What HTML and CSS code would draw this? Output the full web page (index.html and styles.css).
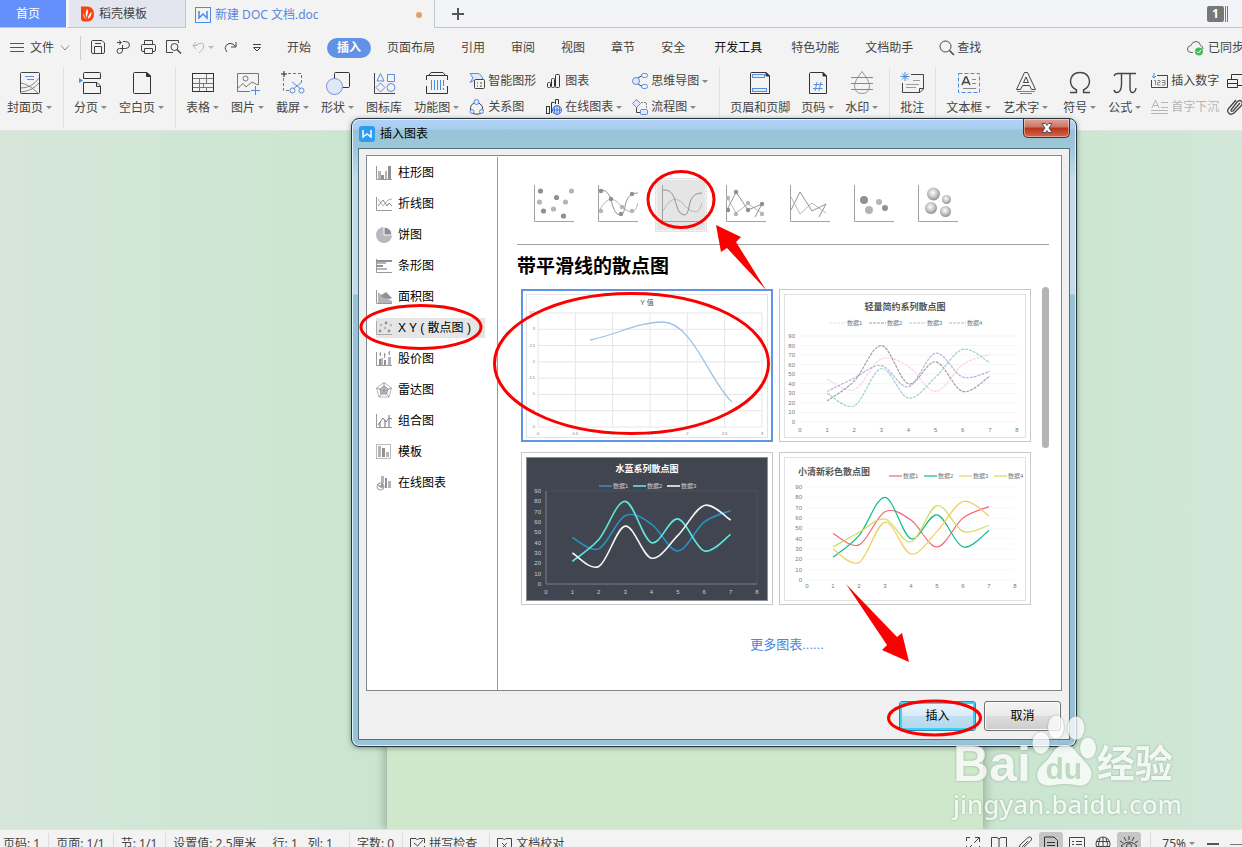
FILE: index.html
```html
<!DOCTYPE html>
<html lang="zh-CN">
<head>
<meta charset="UTF-8">
<meta name="viewport" content="width=device-width, initial-scale=1.0">
<title>新建 DOC 文档.doc</title>
<link rel="stylesheet" href="styles.css">
</head>

<body>

<!-- Document tabs -->
<header class="tabbar">
<button class="tab tab-home">首页</button>
<button class="tab tab-docer">
<svg width="14" height="16" viewBox="0 0 14 16"><path d="M0 0.500H7Q13 1.500 13 8Q13 14.500 7 15.500H3Q0 15.500 0 12Z" fill="#f7410e"/><path d="M6 3Q8 5 6.500 8Q5.500 10 6.500 12Q3 9 6 3ZM10.500 6Q11 10 7 13Q7 9 10.500 6ZM2.500 7Q3 11 6 13Q1.500 12 2.500 7Z" fill="#fff"/></svg>
稻壳模板
</button>
<button class="tab tab-active">
<svg width="16" height="16" viewBox="0 0 16 16" fill="none" stroke="#4a8be6"><rect x=".5" y=".5" width="15" height="15"/><path d="M4 4V11L8 7L12 11V4" stroke-width="1.500"/></svg>
<span>新建 DOC 文档.doc</span>
<i class="unsaved"></i>
</button>
<div class="tab-rest">
<button class="new-tab" aria-label="新建"><svg width="12" height="12" viewBox="0 0 12 12" stroke="#555" stroke-width="2"><path d="M6 0V12M0 6H12"/></svg></button>
<span class="win-count"><b>1</b><i></i><i></i></span>
</div>
</header>

<!-- Menu row -->
<nav class="menubar">
<button class="file-btn">
<svg width="14" height="11" viewBox="0 0 14 11" stroke="#555"><path d="M0 1.500H14M0 5.500H14M0 9.500H14"/></svg>
文件
<svg width="10" height="6" viewBox="0 0 10 6" fill="none" stroke="#888"><path d="M1 .5L5 5L9 .5"/></svg>
</button>
<div class="quick">
<button aria-label="保存"><svg width="15" height="15" viewBox="0 0 15 15" fill="none" stroke="#444"><path d="M1.500 .5H11L13.500 3V12Q13.500 13.500 12 13.500H2Q.5 13.500 .5 12V2Q.5 .5 1.500 .5ZM3.500 13V6.500H10.500V13M4 3.500H10"/></svg></button>
<button aria-label="输出"><svg width="15" height="15" viewBox="0 0 15 15" fill="none" stroke="#444"><path d="M1 2.500H5M3 .5L5.500 2.500L3 4.500M7 1.500H9.500Q13.500 1.500 13.500 5Q13.500 8.500 9.500 8.500H3.500Q1 8.500 1 11Q1 13.500 3.500 13.500Q6.500 13.500 6.500 10V5"/></svg></button>
<button aria-label="打印"><svg width="15" height="15" viewBox="0 0 15 15" fill="none" stroke="#444"><path d="M3.500 4V.5H11.500V4M3.500 11.500H2Q.5 11.500 .5 10V5.500Q.5 4.500 1.500 4.500H13Q14.500 4.500 14.500 5.500V10Q14.500 11.500 13 11.500H11.500M3.500 8.500H11.500V13.500H3.500Z"/></svg></button>
<button aria-label="预览"><svg width="16" height="15" viewBox="0 0 16 15" fill="none" stroke="#444"><path d="M7 12.500H.5V.5H12.500V3"/><circle cx="8.500" cy="7" r="3.500"/><path d="M11 9.500L15 13.500" stroke-width="1.500"/></svg></button>
<button class="undo" aria-label="撤销"><svg width="13" height="13" viewBox="0 0 13 13" fill="none" stroke="#b5b5b5"><path d="M4 1L1 4.500L4 8M1 4.500H5M4 4Q11 0 12 5Q12 8 7 12"/></svg><i class="caret"></i></button>
<button aria-label="恢复"><svg width="13" height="13" viewBox="0 0 13 13" fill="none" stroke="#444"><path d="M12 1V6H7M12 6Q8 1 4 3Q-1 6 3 11"/></svg></button>
<button class="more-quick" aria-label="更多"><svg width="10" height="8" viewBox="0 0 10 8" fill="none" stroke="#444"><path d="M1 .5H9M1.500 3.500H8.500L5 7Z"/></svg></button>
</div>
<div class="menus">
<button>开始</button>
<button class="current">插入</button>
<button>页面布局</button>
<button>引用</button>
<button>审阅</button>
<button>视图</button>
<button>章节</button>
<button>安全</button>
<button class="wide dark">开发工具</button>
<button class="wide">特色功能</button>
<button>文档助手</button>
<button class="find"><svg width="16" height="16" viewBox="0 0 16 16" fill="none" stroke="#444"><circle cx="6.500" cy="6.500" r="5.500"/><path d="M10.500 10.500L15 15" stroke-width="1.500"/></svg>查找</button>
</div>
<button class="sync"><svg width="18" height="16" viewBox="0 0 18 16" fill="none" stroke="#666"><path d="M6 12.500H4Q.5 12.500 .5 9Q.5 6 4 5.500Q5 1.500 9 1.500Q13 1.500 13.500 5.500Q16 6 16 9"/><circle cx="12" cy="11.500" r="4" fill="#3fbf5b" stroke="none"/><path d="M10 11.500L11.500 13L14 10" stroke="#fff"/></svg>已同步</button>
</nav>

<!-- Ribbon -->
<section class="ribbon">
<div class="group first">
<button class="tool"><svg width="24" height="24" viewBox="0 0 24 24" fill="none" stroke="#444"><rect x="2.500" y="1.500" width="19" height="21" rx="1"/><path d="M7 5.500H16M9 8.500H16" stroke="#5b8de0"/><path d="M3 12Q10 13 20 22M3 17Q14 17 21 7M3 21Q14 20 21 12" stroke="#888"/></svg><span>封面页<i class="caret"></i></span></button>
</div>
<div class="group">
<button class="tool"><svg width="24" height="24" viewBox="0 0 24 24" fill="none" stroke="#333"><path d="M4.500 7.500V2.500Q4.500 1.500 5.500 1.500H20.500Q21.500 1.500 21.500 2.500V7.500ZM4.500 11.500V22.500H21.500V15L18 11.500ZM17.500 11.500V15.500H21.500"/><path d="M0 7L4 9.500L0 12Z" fill="#4a8be6" stroke="none"/></svg><span>分页<i class="caret"></i></span></button>
<button class="tool"><svg width="24" height="24" viewBox="0 0 24 24" fill="none" stroke="#333"><path d="M4.500 1.500H17L20.500 5V22.500H4.500Q3.500 22.500 3.500 21.500V2.500Q3.500 1.500 4.500 1.500Z"/><path d="M16.500 1.500V5.500H21Z" fill="#333"/></svg><span>空白页<i class="caret"></i></span></button>
</div>
<div class="group">
<button class="tool"><svg width="24" height="24" viewBox="0 0 24 24" fill="none" stroke="#777"><path d="M1 7.500H22M1 12.500H22M1 16.500H22M8.500 7V21M15.500 2V12M12.500 12V16M15.500 16V21"/><rect x="1.500" y="2.500" width="21" height="18" stroke="#333"/></svg><span>表格<i class="caret"></i></span></button>
<button class="tool"><svg width="24" height="24" viewBox="0 0 24 24" fill="none" stroke="#777"><path d="M14 20.500H1.500V2.500H22.500V14"/><circle cx="9.500" cy="7.500" r="2.500"/><path d="M2 17L7 12.500L10 16L16 11L22 14"/><path d="M19.500 15V24M15 19.500H24" stroke="#4a8be6"/></svg><span>图片<i class="caret"></i></span></button>
<button class="tool"><svg width="24" height="24" viewBox="0 0 24 24" fill="none" stroke="#777"><path d="M7 2.500H20.500V14M2.500 7V19.500H10" stroke-dasharray="3 2"/><path d="M3 0V6M0 3H6" stroke="#222"/><g stroke="#5b8de0"><path d="M11 11L20 18M21 11L12 18"/><circle cx="11.500" cy="19.500" r="2.500"/><circle cx="20.500" cy="19.500" r="2.500"/></g></svg><span>截屏<i class="caret"></i></span></button>
<button class="tool"><svg width="24" height="24" viewBox="0 0 24 24"><rect x="8.500" y="1.500" width="15" height="15" rx="1" fill="none" stroke="#333"/><circle cx="8.500" cy="15.500" r="8" fill="#e0e8f8" stroke="#6b94dc"/></svg><span>形状<i class="caret"></i></span></button>
<button class="tool"><svg width="24" height="24" viewBox="0 0 24 24" fill="none" stroke="#5b8de0"><path d="M2.500 2V22.500H23" stroke="#444"/><path d="M8.500 2.500L12 10H5ZM15.500 3.500H22.500V10.500H15.500ZM8.500 12L13 16.500L8.500 21L4 16.500Z"/><circle cx="19" cy="16.500" r="4"/></svg><span>图标库</span></button>
<button class="tool"><svg width="24" height="24" viewBox="0 0 24 24" fill="none" stroke="#333"><path d="M4 4L6 1.500H18L20 4M1.500 9V4.500H22.500V9M1.500 15V22.500H22.500V15"/><path d="M6.500 9V19M9.500 9V19M12.500 9V19M15.500 9V19M18.500 9V15M18.500 17V19" stroke="#4a8be6"/></svg><span>功能图<i class="caret"></i></span></button>
<div class="pair">
<button><svg width="16" height="16" viewBox="0 0 16 16" fill="none" stroke="#5b8de0"><path d="M1 .5H10L14 5L11 7.500H5L1 9.500L4 5Z" fill="#dfe9f8"/><rect x="5.500" y="6.500" width="10" height="9" rx="1" fill="#f3f3f3" stroke="#444"/><path d="M8 10H9M11 10H13M8 13H9M11 13H13" stroke="#444"/></svg>智能图形</button>
<button><svg width="16" height="16" viewBox="0 0 16 16" fill="none" stroke="#444"><path d="M5 4Q1 6 1.500 11M10 4Q14 6 14 11M4 14.500Q8 16 12 14.500"/><g fill="#dfe9f8" stroke="#5b8de0"><circle cx="7.500" cy="3" r="2.500"/><circle cx="3" cy="12.500" r="2"/><circle cx="12.500" cy="12.500" r="2"/></g></svg>关系图</button>
</div>
<div class="pair">
<button><svg width="16" height="16" viewBox="0 0 16 16" fill="none" stroke="#333"><rect x="1.500" y="9.500" width="3" height="5" rx="1"/><rect x="5.500" y="5.500" width="3" height="9" rx="1"/><rect x="9.500" y="1.500" width="4" height="13" rx="1"/></svg>图表</button>
<button><svg width="16" height="16" viewBox="0 0 16 16" fill="none" stroke="#333"><rect x=".5" y="7.500" width="3" height="7"/><path d="M5.500 14V3.500H8.500M9.500 5V.5H12.500V5"/><circle cx="11" cy="11" r="4.500" fill="#dfe9f8" stroke="#3f78d8"/><path d="M6.500 11H15.500M11 6.500V15.500M9 7Q7.500 11 9 15M13 7Q14.500 11 13 15" stroke="#3f78d8"/></svg>在线图表<i class="caret"></i></button>
</div>
<div class="pair">
<button><svg width="16" height="16" viewBox="0 0 16 16" fill="none" stroke="#5b8de0"><path d="M6 5L10 2.500M6 11L10 13.500" stroke="#444"/><circle cx="4" cy="8" r="3.500" fill="#dfe9f8"/><rect x="9.500" y=".5" width="6" height="4" rx="2"/><rect x="9.500" y="11.500" width="6" height="4" rx="2"/></svg>思维导图<i class="caret"></i></button>
<button><svg width="16" height="16" viewBox="0 0 16 16" fill="none" stroke="#5b8de0"><path d="M4.500 8V13.500H8" stroke="#444"/><path d="M9 3.500H14.500V9" stroke="#888" stroke-dasharray="2 1"/><path d="M4.500 .5L8.500 4.500L4.500 8.500L.5 4.500Z" fill="#dfe9f8"/><rect x="8.500" y="10.500" width="7" height="5" rx="1" fill="#dfe9f8"/></svg>流程图<i class="caret"></i></button>
</div>
</div>
<div class="group tight">
<button class="tool"><svg width="24" height="24" viewBox="0 0 24 24" fill="none" stroke="#333"><path d="M3.500 1.500H18L21.500 5V22.500H2.500V2.500Q2.500 1.500 3.500 1.500Z"/><path d="M18 1.500V5H21.500Z" fill="#333"/><rect x="4.500" y="3.500" width="12" height="3" fill="#dfe9f8" stroke="#5b8de0"/><rect x="4.500" y="17.500" width="14" height="3" fill="#dfe9f8" stroke="#5b8de0"/></svg><span>页眉和页脚</span></button>
<button class="tool"><svg width="24" height="24" viewBox="0 0 24 24" fill="none" stroke="#333"><path d="M4.500 1.500H17L20.500 5V22.500H3.500V2.500Q3.500 1.500 4.500 1.500Z"/><path d="M17 1.500V5H20.500Z" fill="#333"/><path d="M11 11L9 20M15 11L13 20M7.500 13.500H17M7 17.500H16.500" stroke="#5b8de0"/></svg><span>页码<i class="caret"></i></span></button>
<button class="tool"><svg width="24" height="24" viewBox="0 0 24 24" fill="none" stroke="#999"><path d="M12 .5Q4.500 10 4.500 15Q5 22.500 12 22.500Q19 22.500 19.500 15Q19.500 10 12 .5Z"/><path d="M1 6.500H23M1 12.500H23M1 18.500H23" stroke="#5b8de0"/></svg><span>水印<i class="caret"></i></span></button>
</div>
<div class="group">
<button class="tool"><svg width="24" height="24" viewBox="0 0 24 24" fill="none" stroke="#444"><path d="M11 3.500H23.500V18L20 21.500H2.500V12M19.500 21V17.500H23.500"/><path d="M6 13.500H19M6 16.500H16M13 9.500H20" stroke="#999"/><path d="M5 1V10M.5 5.500H9.500M2 2.500L8 8.500M8 2.500L2 8.500" stroke="#4a8be6"/></svg><span>批注</span></button>
</div>
<div class="group last">
<button class="tool"><svg width="24" height="24" viewBox="0 0 24 24" fill="none" stroke="#444"><rect x="1.500" y="2.500" width="21" height="19" stroke="#4a8be6" stroke-dasharray="4 2"/><path d="M5 14L8.500 6H9.500L13 14M6.500 11.500H11.500" stroke-width="1.500"/><path d="M15 8.500H19M15 12.500H19M6 17.500H19" stroke="#888"/></svg><span>文本框<i class="caret"></i></span></button>
<button class="tool"><svg width="24" height="24" viewBox="0 0 24 24" fill="none" stroke="#444"><path d="M2.500 18.500L10.500 1.500H13.500L21.500 18.500H17.500L15.500 14.500H8.500L6.500 18.500ZM9.500 11.500L12 6L14.500 11.500Z"/><path d="M3 20.500H21M6 22.500H18" stroke="#4a8be6"/></svg><span>艺术字<i class="caret"></i></span></button>
<button class="tool far"><svg width="24" height="24" viewBox="0 0 24 24" fill="none" stroke="#444"><path d="M2 21.500H8.500V19Q2.500 16 2.500 10Q3.500 1.500 12 1.500Q20.500 1.500 21.500 10Q21.500 16 15.500 19V21.500H22" stroke-width="1.400"/></svg><span>符号<i class="caret"></i></span></button>
<button class="tool"><svg width="24" height="24" viewBox="0 0 24 24" fill="none" stroke="#444"><path d="M1 5Q2 2.500 5 2.500H23M8.500 3V14Q8 22 3 21.500Q1.500 21 1 19M17 3V17Q17 22 20 21.500Q22.500 21 23 17" stroke-width="1.400"/></svg><span>公式<i class="caret"></i></span></button>
<div class="pair">
<button><svg width="17" height="16" viewBox="0 0 17 16" fill="none" stroke="#444"><path d="M6 2.500H16.500V14.500H.5V7"/><path d="M3 0V5M1 3L3 5L5 3" stroke="#4a8be6"/><path d="M3 7.500H4.500V12M6.500 7.500H9V9.500H6.500V12H9.500M11 7.500H14V12H11M11 9.500H14" stroke="#888"/></svg>插入数字</button>
<button class="off"><svg width="17" height="16" viewBox="0 0 17 16" fill="none" stroke="#b5b5b5"><path d="M1 9L4.500 1L8 9M2 6.500H7M10 3.500H17M10 8.500H17M0 11.500H17M0 14.500H17"/></svg>首字下沉</button>
</div>
<div class="pair edge">
<button aria-label="对象"><svg width="16" height="16" viewBox="0 0 16 16" fill="none" stroke="#333"><path d="M4.500 6V1.500H15M.5 6.500H10.500V14.500H.5ZM.5 10.500H10M10 12.500H16"/></svg></button>
<button aria-label="附件"><svg width="16" height="16" viewBox="0 0 16 16" fill="none" stroke="#444" stroke-width="1.300"><path d="M13 4L6 12Q4 13 4 11L10 3Q13 0 15 3Q16 5 14 7L7 14Q3 17 1 13Q0 11 2 9L9 1"/></svg></button>
</div>
</div>
</section>

<!-- Document area -->
<main class="workspace">
<div class="page"></div>
</main>

<!-- Status bar -->
<footer class="statusbar">
<div class="status-row">
<span class="stat">页码: 1</span>
<span class="stat">页面: 1/1</span>
<span class="stat">节: 1/1</span>
<span class="stat open">设置值: 2.5厘米</span>
<span class="stat line-col"><span>行: 1</span><span>列: 1</span></span>
<span class="stat">字数: 0</span>
<button class="stat check"><svg width="15" height="14" viewBox="0 0 15 14" fill="none" stroke="#444"><path d="M6 11.500H.5V1.500H6L7.500 3L9 1.500H14.500V6M14.500 9V11.500H9M4 6L7.500 9L13 3"/></svg>拼写检查</button>
<button class="stat check open"><svg width="15" height="14" viewBox="0 0 15 14" fill="none" stroke="#444"><path d="M5 12.500H.5V1.500H6L7.500 3L9 1.500H14.500V12.500H10M5 6L10 11M10 6L5 11"/></svg>文档校对</button>
<div class="views">
<button aria-label="全屏"><svg width="16" height="16" viewBox="0 0 16 16" fill="none" stroke="#444"><path d="M1.500 5V1.500H5M10 1.500H14.500V6M14 2L9 7M1.500 10V14.500H5M2 14L7 9M14.500 10V14.500H10"/></svg></button>
<button aria-label="阅读"><svg width="16" height="16" viewBox="0 0 16 16" fill="none" stroke="#444"><path d="M8 3V14M.5 13V1.500H6L8 3L10 1.500H15.500V13H10L8 14L6 13Z"/></svg></button>
<button aria-label="写作"><svg width="16" height="16" viewBox="0 0 16 16" fill="none" stroke="#444"><path d="M1 15L3 9L11 1.500Q13 0 14.500 2Q15 4 13.500 5L6 12ZM11 5L5 11"/></svg></button>
<button class="on" aria-label="页面"><svg width="16" height="16" viewBox="0 0 16 16" fill="none" stroke="#333"><path d="M1.500 1H11L14.500 4.500V15H1.500ZM4 6.500H12M4 9.500H12M4 12.500H9"/></svg></button>
<button aria-label="大纲"><svg width="16" height="16" viewBox="0 0 16 16" fill="none" stroke="#444"><path d="M.5 1.500H15.500V15H.5ZM3 5.500H5M7 5.500H13M3 8.500H5M7 8.500H13M3 11.500H5M7 11.500H13"/></svg></button>
<button aria-label="网页"><svg width="16" height="16" viewBox="0 0 16 16" fill="none" stroke="#444"><circle cx="8" cy="8" r="7"/><path d="M1 5.500H15M1 10.500H15M8 1V15M5 2Q2 8 5 14M11 2Q14 8 11 14"/></svg></button>
<button class="on" aria-label="护眼"><svg width="18" height="16" viewBox="0 0 18 16" fill="none" stroke="#444"><path d="M1 10Q9 2 17 10Q9 17 1 10ZM9 0V4M4 1L6 5M14 1L12 5M0 5L3 7M18 5L15 7"/><circle cx="9" cy="10" r="2.500"/></svg></button>
</div>
<button class="zoom-value">75%<i class="caret"></i></button>
<button class="zoom-minus" aria-label="缩小"></button>
<i class="zoom-track"></i>
</div>
</footer>

<!-- Insert chart dialog -->
<div class="dialog" role="dialog" aria-labelledby="dialogTitle">
<div class="titlebar">
<svg width="16" height="16" viewBox="0 0 16 16"><rect width="16" height="16" rx="3" fill="#2b9df4"/><path d="M4 4V11L8 8L12 11V4" fill="none" stroke="#fff" stroke-width="1.500"/></svg>
<span id="dialogTitle">插入图表</span>
<button class="close" aria-label="关闭"><svg width="12" height="10" viewBox="0 0 12 10"><path d="M1 .5H4.500L6 2.500L7.500 .5H11L8 5L11 9.500H7.500L6 7.500L4.500 9.500H1L4 5Z" fill="#fff" stroke="#4d5566"/></svg></button>
</div>
<div class="client">
<div class="panel">
<nav class="kinds">
<button><svg width="16" height="16" viewBox="0 0 16 16"><path d="M.5 1V14.500H16" fill="none" stroke="#999"/><path d="M2 6H5V14H2ZM9 6H11V14H9Z" fill="#b4b4ba"/><path d="M5 10H8V14H5ZM12 1H15V14H12Z" fill="#909096"/></svg>柱形图</button>
<button><svg width="16" height="16" viewBox="0 0 16 16" fill="none" stroke="#999"><path d="M.5 1V14.500H16"/><path d="M2 3L7 10L12 4L16 3" stroke="#b4b4ba"/><path d="M2 10L7 4L11 10L13 7L16 10" stroke="#888"/></svg>折线图</button>
<button><svg width="16" height="16" viewBox="0 0 16 16"><circle cx="8" cy="8" r="8" fill="#b8b8be"/><path d="M8 8V0A8 8 0 0 1 16 8Z" fill="#8f8f95" stroke="#fff"/></svg>饼图</button>
<button><svg width="16" height="16" viewBox="0 0 16 16"><path d="M.5 1V14.500H16" fill="none" stroke="#999"/><path d="M1 2H16V4H1Z" fill="#909096"/><path d="M1 4H10V6H1ZM1 10H11V12H1Z" fill="#b4b4ba"/><path d="M1 7H7V9H1Z" fill="#909096"/></svg>条形图</button>
<button><svg width="16" height="16" viewBox="0 0 16 16"><path d="M.5 1V14.500H16" fill="none" stroke="#999"/><path d="M2 3L8 8L16 12V14H2Z" fill="#b4b4ba"/><path d="M4 7L10 3L16 9L13 10L8 9Z" fill="#909096"/></svg>面积图</button>
<button class="selected"><svg width="16" height="16" viewBox="0 0 16 16"><path d="M.5 1V14.500H16" fill="none" stroke="#aaa"/><g fill="#909096"><circle cx="4" cy="11" r="1.400"/><circle cx="10" cy="3" r="1.400"/><circle cx="13" cy="11" r="1.400"/></g><g fill="#b4b4ba"><circle cx="5" cy="5" r="1.300"/><circle cx="9" cy="8" r="1.300"/><circle cx="15" cy="5" r="1.200"/></g></svg>X Y ( 散点图 )</button>
<button><svg width="16" height="16" viewBox="0 0 16 16"><path d="M.5 1V14.500H16M4.500 1V5M8.500 2V7M13.500 0V4M3 3H5M8 4H10M12 2H14" fill="none" stroke="#999"/><path d="M3 8H5V14H3ZM8 9H10V14H8Z" fill="#909096"/><path d="M5 7H7V14H5ZM12 6H15V14H12Z" fill="#b4b4ba"/></svg>股价图</button>
<button><svg width="16" height="16" viewBox="0 0 16 16" stroke="#999"><path d="M8 .5L15.500 6L13 15H3L.5 6Z" fill="none" stroke="#b4b4ba"/><path d="M8 4L12 7L10.500 12H5L4 7Z" fill="#c4c4ca"/><path d="M8 .5V9M.5 6L8 9L15.500 6M3 15L8 9L13 15" fill="none"/></svg>雷达图</button>
<button><svg width="16" height="16" viewBox="0 0 16 16"><path d="M.5 1V14.500H16" fill="none" stroke="#999"/><path d="M3 9H5V14H3ZM8 7H10V14H8ZM12 2H14V14H12Z" fill="#b4b4ba"/><path d="M2 12L7 5L10 9L13 5L16 6" fill="none" stroke="#808086"/></svg>组合图</button>
<button><svg width="16" height="16" viewBox="0 0 16 16"><rect x=".5" y=".5" width="14" height="14" fill="none" stroke="#bbb"/><path d="M2 2H5V13H2ZM10 8H13V13H10Z" fill="#b4b4ba"/><path d="M6 4H9V13H6Z" fill="#909096"/></svg>模板</button>
<button><svg width="16" height="16" viewBox="0 0 16 16"><path d="M5 1H8V8H5ZM12 6H15V13H12Z" fill="#b4b4ba"/><path d="M9 3H11V13H9Z" fill="#909096"/><circle cx="4.500" cy="11.500" r="3.500" fill="#fff" stroke="#999"/><path d="M2 10L5 12L6 9L7 13" fill="none" stroke="#999" stroke-width="1.500"/></svg>在线图表</button>
</nav>
<div class="content">
<div class="types">
<button aria-label="散点图"><svg width="40" height="37" viewBox="0 0 40 37"><path class="axis" d="M.5 0V36.500H40"/><g fill="#8f8f95"><circle cx="6.500" cy="6" r="2.600"/><circle cx="22.500" cy="12.500" r="2.600"/><circle cx="9.500" cy="26" r="2.600"/><circle cx="29.500" cy="31" r="2.600"/></g><g fill="#b4b4ba"><circle cx="37.500" cy="6" r="2.600"/><circle cx="5.500" cy="17" r="2.600"/><circle cx="31.500" cy="17" r="2.600"/><circle cx="19.500" cy="24" r="2.600"/></g></svg></button>
<button aria-label="带平滑线和数据标记的散点图"><svg width="40" height="37" viewBox="0 0 40 37"><path class="axis" d="M.5 0V36.500H40"/><path class="light" d="M1 26Q7 14 14 14Q19 15 24 22Q29 27 34 27Q38 26 40 18"/><path class="deep" d="M1 5H4C16 6 12 29 22 30C30 30 23 8 40 8"/><g fill="#8f8f95"><circle cx="3" cy="6" r="2.200"/><circle cx="13" cy="14" r="2.200"/><circle cx="23" cy="29" r="2.200"/><circle cx="34" cy="9" r="2.200"/></g><g fill="#b4b4ba"><circle cx="3" cy="26" r="2.200"/><circle cx="24" cy="22" r="2.200"/><circle cx="34" cy="26" r="2.200"/></g></svg></button>
<button class="picked" aria-label="带平滑线的散点图"><svg width="40" height="37" viewBox="0 0 40 37"><path class="axis" d="M.5 0V36.500H40"/><path class="light" d="M1 26Q7 14 14 14Q19 15 24 22Q29 27 34 27Q38 26 40 18"/><path class="deep" d="M1 5H4C16 6 12 29 22 30C30 30 23 8 40 8"/></svg></button>
<button aria-label="带直线和数据标记的散点图"><svg width="40" height="37" viewBox="0 0 40 37"><path class="axis" d="M.5 0V36.500H40"/><path class="light" d="M1 12L10 28L22 19L36 28"/><path class="deep" d="M1 25L10 7L22 25L36 19L29 32"/><g fill="#8f8f95"><circle cx="2" cy="25" r="2.200"/><circle cx="10" cy="7" r="2.200"/><circle cx="22" cy="25" r="2.200"/><circle cx="36" cy="19" r="2.200"/></g><g fill="#b4b4ba"><circle cx="2" cy="13" r="2.200"/><circle cx="10" cy="29" r="2.200"/><circle cx="22" cy="18" r="2.200"/><circle cx="36" cy="29" r="2.200"/></g></svg></button>
<button aria-label="带直线的散点图"><svg width="40" height="37" viewBox="0 0 40 37"><path class="axis" d="M.5 0V36.500H40"/><path class="light" d="M1 12L10 29L22 18L36 28"/><path class="deep" d="M1 25L10 7L22 26L36 19L29 32"/></svg></button>
<button aria-label="气泡图"><svg width="40" height="37" viewBox="0 0 40 37"><path class="axis" d="M.5 0V36.500H40"/><g fill="#8f8f95"><circle cx="10" cy="15" r="4"/><circle cx="31" cy="23" r="3"/></g><g fill="#b4b4ba"><circle cx="15" cy="25" r="4"/><circle cx="25" cy="17" r="3"/></g></svg></button>
<button aria-label="三维气泡图"><svg width="40" height="37" viewBox="0 0 40 37"><defs><radialGradient id="ball" cx=".45" cy=".4" r=".65"><stop offset="0" stop-color="#fff"/><stop offset=".5" stop-color="#c8c8c8"/><stop offset="1" stop-color="#858585"/></radialGradient></defs><path class="axis" d="M.5 0V36.500H40"/><g fill="url(#ball)"><circle cx="15.500" cy="9" r="6.500"/><circle cx="28.500" cy="14.500" r="4.500"/><circle cx="13" cy="23" r="6"/><circle cx="27.500" cy="26.500" r="5.500"/></g></svg></button>
</div>
<h2>带平滑线的散点图</h2>
<div class="gallery">
<div class="thumbs">
<button class="thumb chosen" aria-label="Y 值"><svg id="chartDefault" width="242" height="144" viewBox="0 0 242 144"></svg></button>
<button class="thumb" aria-label="轻量简约系列散点图"><svg id="chartLight" width="242" height="144" viewBox="0 0 242 144"></svg></button>
<button class="thumb" aria-label="水蓝系列散点图"><svg id="chartDark" width="242" height="144" viewBox="0 0 242 144"></svg></button>
<button class="thumb" aria-label="小清新彩色散点图"><svg id="chartColor" width="242" height="144" viewBox="0 0 242 144"></svg></button>
</div>
<div class="scrollbar"></div>
</div>
<a class="more" href="#">更多图表......</a>
</div>
</div>
<div class="actions">
<button class="btn primary">插入</button>
<button class="btn">取消</button>
</div>
</div>
</div>

<!-- Watermark -->
<div class="watermark">
<div class="wm-logo">
<span class="wm-bai">Bai</span>
<span class="wm-paw">
<svg width="66" height="74" viewBox="0 0 66 74" fill="#fff"><ellipse cx="10" cy="28" rx="8.500" ry="11"/><ellipse cx="25" cy="12" rx="8" ry="11.500"/><ellipse cx="45" cy="13" rx="8.500" ry="11.500"/><ellipse cx="57" cy="33" rx="8" ry="10.500"/><path d="M34 30Q41 30 46 38Q52 44 57 50Q63 58 59 65Q54 73 44 70Q34 68 24 70Q12 73 7 65Q4 57 11 50Q18 44 22 37Q27 30 34 30Z"/></svg>
<b>du</b>
</span>
<span class="wm-jy">经验</span>
</div>
<div class="wm-url">jingyan.baidu.com</div>
</div>

<!-- Red marks -->
<svg class="marks" width="1242" height="847" viewBox="0 0 1242 847">
<g fill="none" stroke="#fb0000" stroke-width="3">
<ellipse cx="681" cy="199.500" rx="33" ry="28"/>
<ellipse cx="421" cy="327" rx="60" ry="21.500"/>
<ellipse cx="631.500" cy="363.500" rx="137" ry="70"/>
<ellipse cx="934.500" cy="718" rx="46" ry="17"/>
</g>
<g fill="#fb0000">
<path d="M716 225L741 237L736 242L766 290L727 248L721 252Z"/>
<path d="M846 584L897 637L902 633L909 662L882 650L887 645Z"/>
</g>
</svg>

<script src="charts.js"></script>
</body>
</html>
```

FILE: styles.css
```css
*{
    box-sizing:border-box;
}

body{
    margin:0;
    height:100vh;
    display:flex;
    flex-direction:column;
    overflow:hidden;
    position:relative;
    background:#f3f3f3;
    color:#444;
    font-family:"Noto Sans", "Noto Sans CJK SC", sans-serif;
    font-size:12px;
    line-height:16px;
}

button{
    border:none;
    padding:0;
    background:none;
    color:inherit;
    font:inherit;
    white-space:nowrap;
    cursor:pointer;
}

svg{
    display:block;
    flex:none;
}

.caret{
    display:inline-block;
    margin-left:3px;
    border:3px solid transparent;
    border-top-color:#888;
    border-bottom:none;
    vertical-align:3px;
}

/* tabs */
.tabbar{
    display:flex;
    flex:none;
    height:28px;
}

.tab{
    display:flex;
    align-items:center;
    padding-top:1px;
    border-bottom:1px solid #c0c6d0;
}

.tab-home{
    width:66px;
    padding-left:16px;
    background:#6390fb;
    color:#fff;
}

.tab-docer{
    width:120px;
    gap:4px;
    padding-left:12px;
    background:#e3e6ef;
    border-left:3px solid #f3f4f8;
    border-right:1px solid #c0c6d0;
}

.tab-active{
    width:249px;
    gap:4px;
    padding:1px 12px 0 9px;
    color:#5a87d8;
    border-bottom:none;
    border-right:1px solid #c0c6d0;
}

.unsaved{
    width:6px;
    height:6px;
    margin-left:auto;
    border-radius:50%;
    background:#e8a05c;
}

.tab-rest{
    display:flex;
    flex:1;
    align-items:center;
    justify-content:space-between;
    padding:0 14px 0 17px;
    background:#f3f4f8;
    border-bottom:1px solid #c0c6d0;
}

.win-count{
    display:flex;
    gap:1px;
}

.win-count b{
    width:17px;
    border-radius:2px;
    background:#777;
    color:#fff;
    text-align:center;
}

.win-count i{
    width:1px;
    background:#777;
}

/* menu row */
.menubar{
    display:flex;
    flex:none;
    align-items:center;
    height:39px;
    padding-left:10px;
    overflow:hidden;
}

.menubar button{
    display:flex;
    flex:none;
    align-items:center;
}

.file-btn{
    gap:6px;
    height:24px;
    padding-right:10px;
    border-right:1px solid #ccc;
}

.quick{
    display:flex;
    align-items:center;
    gap:10px;
    padding-left:10px;
    width:206px;
}

.undo .caret{
    border-top-color:#bbb;
}

.more-quick{
    margin-left:5px;
}

.menus{
    display:flex;
    align-items:center;
    gap:26px;
}

.menus .current{
    height:20px;
    margin:0 -10px;
    padding:0 10px;
    border-radius:10px;
    background:#6092e8;
    color:#fff;
    font-weight:bold;
}

.menus .wide{
    margin-left:3px;
}

.menus .dark{
    color:#111;
}

.menus .find{
    gap:2px;
}

.sync{
    gap:3px;
    margin-left:auto;
    margin-right:-2px;
}

/* ribbon */
.ribbon{
    display:flex;
    flex:none;
    height:63px;
    padding-bottom:2px;
    overflow:hidden;
}

.group{
    display:flex;
    flex:none;
    gap:12px;
    padding:0 11px 0 10px;
    border-right:1px solid #e2e2e2;
}

.group.first{
    padding-left:7px;
}

.group.tight{
    gap:11px;
}

.group.last{
    border-right:none;
}

.tool{
    display:flex;
    flex-direction:column;
    align-items:center;
    gap:5px;
    padding-top:4px;
}

.far{
    margin-left:3px;
}

.pair{
    display:flex;
    flex-direction:column;
    align-items:flex-start;
    gap:10px;
    margin-left:-2px;
    padding-top:6px;
}

.pair button{
    display:flex;
    align-items:center;
    gap:3px;
}

.pair .caret{
    margin-left:0;
}

.pair.edge{
    margin-left:-4px;
}

.off{
    color:#b5b5b5;
}

/* document */
.workspace{
    display:flex;
    flex:1;
    justify-content:center;
    min-height:0;
    padding-left:128px;
    overflow:hidden;
    border-top:1px solid #dfe6df;
    background:linear-gradient(90deg, #d6e6da, #cbe6d0 28%, #cbe6d0 84%, #d2e6d8);
}

.page{
    width:596px;
    background:#cfe8cb;
    box-shadow:0 0 10px 2px #94ab98;
}

/* status bar */
.statusbar{
    flex:none;
    height:18px;
    overflow:hidden;
    border-top:1px solid #e2e2e2;
    background:#f3f3f3;
}

.status-row{
    display:flex;
    align-items:center;
    height:28px;
}

.stat{
    display:flex;
    align-items:center;
    gap:4px;
    height:22px;
    padding:0 8px 0 3px;
    border-right:1px solid #ddd;
}

.stat + .stat{
    padding-left:7px;
}

.stat.open{
    border-right-color:transparent;
}

.stat.line-col{
    gap:10px;
    padding-right:16px;
}

.stat.check{
    padding-right:12px;
}

.views{
    display:flex;
    gap:2px;
    margin-left:auto;
    padding-right:9px;
    border-right:1px solid #ddd;
}

.views button{
    display:flex;
    align-items:center;
    justify-content:center;
    width:24px;
    height:24px;
    border-radius:3px;
}

.views .on{
    background:#c6c6c6;
}

.zoom-value{
    padding:0 12px 0 11px;
}

.zoom-minus{
    width:12px;
    height:2px;
    background:#555;
}

.zoom-track{
    width:12px;
    height:1px;
    margin-left:11px;
    background:#777;
}

/* dialog */
.dialog{
    position:absolute;
    left:351px;
    top:118px;
    width:726px;
    padding:0 6px 6px;
    border:1px solid #26323c;
    border-radius:8px;
    background:linear-gradient(180deg, #b0d2f6 0, #a9cdf0 10px, #98c2d8 11px, #9cc8d8 28px, #c3dce8 60px, #c3dce8 175px, #98c2d6 176px);
    box-shadow:inset 0 0 0 1px #e0f2fb, 0 1px 5px rgba(40,60,50,.5);
    color:#000;
    font-family:"Liberation Sans", "Noto Sans CJK SC", sans-serif;
}

.titlebar{
    display:flex;
    align-items:center;
    gap:5px;
    height:29px;
    padding-left:1px;
}

.close{
    display:flex;
    align-items:center;
    justify-content:center;
    align-self:flex-start;
    width:47px;
    height:19px;
    margin-left:auto;
    border:1px solid #5a2622;
    border-top:none;
    border-radius:0 0 5px 5px;
    background:linear-gradient(180deg, #e0a496, #cd7463 45%, #b8321a 50%, #d4684a);
    box-shadow:inset 0 0 0 1px rgba(255,255,255,.4);
}

.client{
    padding:6px 7px 8px;
    border:1px solid #53727f;
    background:#f0f0f0;
}

.panel{
    display:flex;
    height:536px;
    border:1px solid #828790;
    background:#fff;
}

.kinds{
    display:flex;
    flex-direction:column;
    flex:none;
    gap:11px;
    width:131px;
    margin-top:1px;
    padding:6px 12px 0 9px;
    border-right:1px solid #999;
}

.kinds button{
    display:flex;
    align-items:center;
    gap:6px;
    height:20px;
}

.kinds .selected{
    background:#e5e5e5;
}

.content{
    flex:1;
    padding:22px 12px 0 19px;
}

.types{
    display:flex;
    gap:12px;
    padding:0 0 12px 10px;
    border-bottom:1px solid #a0a0a0;
}

.types button{
    width:52px;
    height:54px;
    padding:7px 6px;
}

.types .picked{
    background:#e5e5e5;
    outline:1px dotted #fff;
    outline-offset:-2px;
}

.types svg{
    height:37px;
    margin:-3px 0 0 1px;
}

.axis,
.light,
.deep{
    fill:none;
    stroke:#a0a0a6;
}

.light{
    stroke:#b8b8be;
}

.deep{
    stroke:#929298;
}

h2{
    margin:9px 0 7px;
    font-size:19px;
    line-height:26px;
}

.gallery{
    display:flex;
    justify-content:space-between;
}

.thumbs{
    display:grid;
    grid-template-columns:252px 252px;
    gap:10px 6px;
    padding:2px 0 0 4px;
}

.thumb{
    display:flex;
    align-items:center;
    justify-content:center;
    height:153px;
    border:1px solid #c8c8c8;
    background:#fff;
}

.thumb.chosen{
    border:2px solid #5f93e6;
}

.thumb text{
    font-size:6px;
    fill:#777;
}

.thumb .chart-title{
    font-size:9px;
    font-weight:bold;
    fill:#555;
}

#chartDark text{
    fill:#c8ccd2;
}

#chartDark .chart-title{
    fill:#fff;
}

#chartDefault text{
    font-size:4px;
}

#chartDefault .chart-title{
    font-size:7px;
    font-weight:normal;
}

.scrollbar{
    width:7px;
    height:161px;
    border-radius:4px;
    background:#b4b4b6;
}

.more{
    display:block;
    margin-top:30px;
    padding-left:8px;
    color:#4a86e0;
    font-size:13px;
    line-height:20px;
    text-align:center;
    text-decoration:none;
}

.actions{
    display:flex;
    justify-content:flex-end;
    gap:8px;
    padding:10px 1px 0;
}

.btn{
    width:77px;
    height:30px;
    border:1px solid #707070;
    border-radius:3px;
    background:linear-gradient(180deg, #f3f3f3, #ebebeb 48%, #dddddd 50%, #cdcdcd);
    box-shadow:inset 0 0 0 1px #fafafa;
}

.btn.primary{
    border-color:#2f86ae;
    background:linear-gradient(180deg, #eaf5fc, #d8ecf8 48%, #bfe0f2 50%, #b0d8ee);
    box-shadow:inset 0 0 0 2px #3fd0f5;
}

/* watermark */
.watermark{
    position:absolute;
    left:953px;
    top:713px;
    color:#fff;
    opacity:.75;
    filter:drop-shadow(0 0 1px #7d957f);
    pointer-events:none;
}

.wm-logo{
    display:flex;
    align-items:flex-end;
    height:76px;
    font-family:"Liberation Sans", "Noto Sans CJK SC", sans-serif;
    font-weight:bold;
}

.wm-bai{
    font-size:50px;
    line-height:50px;
}

.wm-paw{
    display:grid;
    width:66px;
    height:74px;
}

.wm-paw svg,
.wm-paw b{
    grid-area:1 / 1;
}

.wm-paw b{
    align-self:end;
    justify-self:center;
    padding-bottom:4px;
    color:#bdd6be;
    font-size:30px;
    line-height:32px;
}

.wm-jy{
    font-size:38px;
    line-height:50px;
}

.wm-url{
    font-size:26px;
    font-weight:500;
    line-height:30px;
}

.marks{
    position:absolute;
    left:0;
    top:0;
    pointer-events:none;
}
```

FILE: charts.js
```js
const series = [
    [45, 34, 66, 58, 32, 60, 71],
    [22, 43, 80, 40, 63, 32, 48],
    [30, 17, 56, 25, 47, 76, 62],
    [32, 46, 59, 37, 72, 47, 53]
];

// smooth line through all points
function smoothPath(points){
    let d = `M${points[0][0]} ${points[0][1]}`;
    for(let i = 0; i < points.length - 1; i++){
        const a = points[i - 1] || points[i];
        const b = points[i];
        const c = points[i + 1];
        const e = points[i + 2] || c;
        d += `C${b[0] + (c[0] - a[0]) / 6} ${b[1] + (c[1] - a[1]) / 6} `;
        d += `${c[0] - (e[0] - b[0]) / 6} ${c[1] - (e[1] - b[1]) / 6} ${c[0]} ${c[1]}`;
    }
    return d;
}

function text(x, y, anchor, value, cls){
    return `<text x="${x}" y="${y}" text-anchor="${anchor}" class="${cls || ""}">${value}</text>`;
}

function drawChart(id, o){
    const stepX = (o.right - o.left) / 8;
    const stepY = (o.bottom - o.top) / 9;
    let out = `<rect x=".5" y=".5" width="241" height="143" fill="${o.bg}" stroke="${o.frame}"/>`;
    out += text(o.titleX, o.titleY, o.titleAnchor, o.title, "chart-title");

    for(let i = 0; i <= 9; i++){
        const y = o.bottom - i * stepY;
        if(o.grid){
            out += `<path d="M${o.left} ${y}H${o.right}" stroke="${o.grid}"/>`;
        }
        out += text(o.left - 5, y + 2, "end", i * 10);
    }
    if(o.box){
        out += `<path d="M${o.left} ${o.top}H${o.right}V${o.bottom}" fill="none" stroke="#4d515e"/>`;
        out += `<path d="M${o.left} ${o.top}V${o.bottom}H${o.right}" fill="none" stroke="${o.box}"/>`;
    }
    for(let i = 0; i <= 8; i++){
        out += text(o.left + i * stepX, o.bottom + o.labelDrop, "middle", i);
    }

    o.colors.forEach((color, n) => {
        const line = `fill="none" stroke="${color}" stroke-width="${o.weight}" stroke-dasharray="${o.dash || "none"}"`;
        const points = series[n].map((v, i) => [o.left + (i + 1) * stepX, o.bottom - v * stepY / 10]);
        const x = o.legendX + n * o.legendStep;
        out += `<path d="${smoothPath(points)}" ${line}/>`;
        out += `<path d="M${x} ${o.legendY - 2}H${x + o.key}" ${line}/>`;
        out += text(x + o.key + 1, o.legendY, "start", "数据" + (n + 1));
    });

    document.getElementById(id).innerHTML = out;
}

function drawDefault(){
    const left = 12, right = 236, top = 19, bottom = 133;
    let out = `<rect x=".5" y=".5" width="241" height="143" fill="#fff" stroke="#e2e2e2"/>`;
    out += text(121, 11, "middle", "Y 值", "chart-title");
    for(let i = 0; i <= 7; i++){
        const y = bottom - i * (bottom - top) / 7;
        out += `<path d="M${left} ${y}H${right}" stroke="#e6e6e6"/>`;
        out += text(left - 3, y + 1, "end", i / 2);
    }
    for(let i = 0; i <= 6; i++){
        const x = left + i * (right - left) / 6;
        out += `<path d="M${x} ${top}V${bottom}" stroke="#e6e6e6"/>`;
        out += text(x, 141, "middle", i / 2);
    }
    out += `<path d="M64 46C90 41 112 28 137 28C166 28 184 88 206 108" fill="none" stroke="#9dc3e6" stroke-width="1.300"/>`;
    document.getElementById("chartDefault").innerHTML = out;
}

drawDefault();

drawChart("chartLight", {
    title: "轻量简约系列散点图", titleX: 121, titleY: 16, titleAnchor: "middle",
    left: 16, right: 233, top: 42, bottom: 128, labelDrop: 10,
    bg: "#fff", frame: "#e2e2e2", grid: "#f5f5f5",
    legendX: 45, legendY: 31, legendStep: 40, key: 17,
    colors: ["#fbd3db", "#a0a0a0", "#9bd3ca", "#b4b4e0"],
    weight: 1.2, dash: "3 1"
});

drawChart("chartDark", {
    title: "水蓝系列散点图", titleX: 121, titleY: 15, titleAnchor: "middle",
    left: 20, right: 231, top: 34, bottom: 127, labelDrop: 10,
    bg: "#414550", frame: "#8d9098", box: "#7d8088",
    legendX: 73, legendY: 31, legendStep: 34, key: 13,
    colors: ["#2a8fc0", "#5ee6dc", "#f5f5f5"],
    weight: 1.6
});

drawChart("chartColor", {
    title: "小清新彩色散点图", titleX: 14, titleY: 18, titleAnchor: "start",
    left: 23, right: 231, top: 30, bottom: 123, labelDrop: 8,
    bg: "#fff", frame: "#e2e2e2", grid: "#f8f8f8",
    legendX: 105, legendY: 21, legendStep: 35, key: 13,
    colors: ["#f4647c", "#10bd8c", "#f2cd5c", "#d0dc58"],
    weight: 1.2
});
```
